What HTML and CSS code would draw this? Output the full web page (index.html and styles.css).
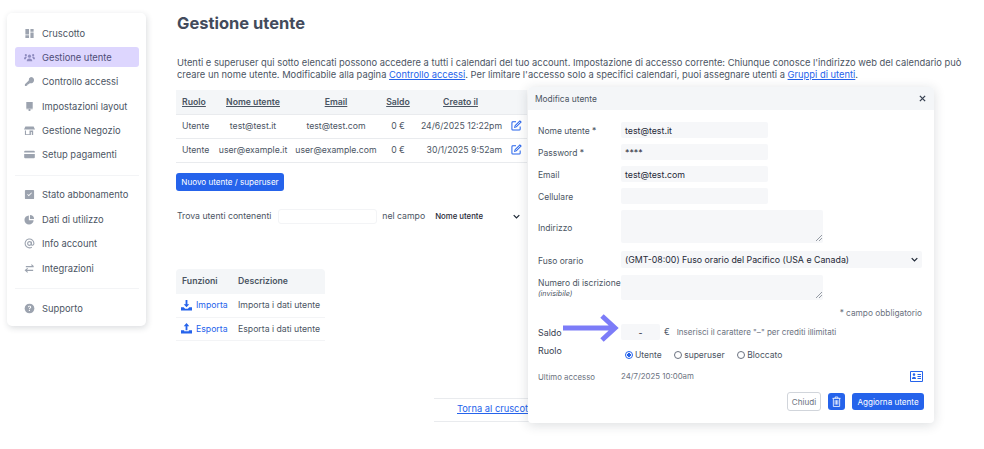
FILE: index.html
```html
<!DOCTYPE html>
<html lang="en">
<head>
  <meta charset="UTF-8">
  <title>Gestione utente</title>
  <link rel="stylesheet" href="styles.css">
</head>
<body>

  <nav class="sidebar">
    <a class="nav-item"><svg class="nav-icon" viewBox="0 0 12 12"><path d="M1.500 1h4v6h-4zM1.500 8h4v3h-4zM7 1h3.500v3H7zM7 5h3.500v6H7z"/></svg>Cruscotto</a>
    <a class="nav-item active"><svg class="nav-icon" viewBox="0 0 12 12"><circle cx="6" cy="4.500" r="1.700"/><circle cx="2" cy="3.500" r="1.200"/><circle cx="10" cy="3.500" r="1.200"/><path d="M3 10c0-2 1-3 3-3s3 1 3 3zM0 8c0-2 1-3 2-3 .6 0 1 .2 1.300.5C2.500 6.200 2 7 2 8zM12 8c0-2-1-3-2-3-.6 0-1 .2-1.300.5.800.7 1.300 1.500 1.300 2.500z"/></svg>Gestione utente</a>
    <a class="nav-item"><svg class="nav-icon" viewBox="0 0 12 12"><path d="M7.500 1a3.500 3.500 0 1 1-1.200 6.800L5 9H4v1H3v1H1V9l4.200-4.200A3.500 3.500 0 0 1 7.500 1z"/></svg>Controllo accessi</a>
    <a class="nav-item"><svg class="nav-icon" viewBox="0 0 12 12"><path d="M2.500 1h7v6.500h-7zM2.500 8h7v1H7v2H5V9H2.500z"/></svg>Impostazioni layout</a>
    <a class="nav-item"><svg class="nav-icon" viewBox="0 0 12 12"><path d="M1.500 1.500h9L12 5H0zM1 6h1.200v4H6V6h4v5H8.500V7.500H7.500V11H1z"/></svg>Gestione Negozio</a>
    <a class="nav-item"><svg class="nav-icon" viewBox="0 0 12 12"><path d="M1.200 2h9.600a1 1 0 0 1 1 1v.8H.2V3a1 1 0 0 1 1-1zM.2 5.500h11.600V9a1 1 0 0 1-1 1H1.200a1 1 0 0 1-1-1z"/></svg>Setup pagamenti</a>
    <hr class="nav-rule">
    <a class="nav-item"><svg class="nav-icon" viewBox="0 0 12 12"><path fill-rule="evenodd" d="M2 1h8a1 1 0 0 1 1 1v8a1 1 0 0 1-1 1H2a1 1 0 0 1-1-1V2a1 1 0 0 1 1-1zm1.500 5L5.200 7.800 8.700 4.300l-.6-.6-2.900 2.900-1.100-1.200z"/></svg>Stato abbonamento</a>
    <a class="nav-item"><svg class="nav-icon" viewBox="0 0 12 12"><path d="M5.300 1.500v5.200h5.200A5 5 0 1 1 5.300 1.500zM6.500 1a4.500 4.500 0 0 1 4.500 4.500H6.500z"/></svg>Dati di utilizzo</a>
    <a class="nav-item"><svg class="nav-icon stroke" viewBox="0 0 12 12"><circle cx="6" cy="6" r="2"/><path d="M8 4v2.800c0 1.500 2.800 1.500 2.800-.8A4.800 4.800 0 1 0 8.500 10"/></svg>Info account</a>
    <a class="nav-item"><svg class="nav-icon stroke" viewBox="0 0 12 12"><path d="M2 4h8.500M8 1.800 10.500 4M10 8H1.500M4 5.800 1.500 8 4 10.200"/></svg>Integrazioni</a>
    <hr class="nav-rule">
    <a class="nav-item"><svg class="nav-icon" viewBox="0 0 12 12"><circle cx="6" cy="6" r="5.300"/><path d="M4.300 4.500C4.500 3.500 5.200 3 6.100 3c1 0 1.700.6 1.700 1.500 0 1.300-1.400 1.200-1.400 2.300H5.400c0-1.600 1.300-1.500 1.300-2.300 0-.4-.3-.6-.7-.6-.4 0-.7.300-.8.800zM5.300 7.500h1.200v1.200H5.300z" fill="#fff"/></svg>Supporto</a>
  </nav>

  <main class="content">
    <h1>Gestione utente</h1>
    <p class="intro">Utenti e superuser qui sotto elencati possono accedere a tutti i calendari del tuo account. Impostazione di accesso corrente: Chiunque conosce l'indirizzo web del calendario può creare un nome utente. Modificabile alla pagina <a href="#">Controllo accessi</a>. Per limitare l'accesso solo a specifici calendari, puoi assegnare utenti a <a href="#">Gruppi di utenti</a>.</p>

    <table class="users">
      <thead>
        <tr><th class="role">Ruolo</th><th class="name">Nome utente</th><th class="mail">Email</th><th class="bal">Saldo</th><th class="date">Creato il</th><th class="edit"></th></tr>
      </thead>
      <tbody>
        <tr>
          <td class="role">Utente</td><td class="name">test@test.it</td><td class="mail">test@test.com</td><td class="bal">0 €</td><td class="date">24/6/2025 12:22pm</td>
          <td class="edit"><svg class="edit-icon" viewBox="0 0 12 12"><path d="M5.500 2H2a1 1 0 0 0-1 1v7a1 1 0 0 0 1 1h7a1 1 0 0 0 1-1V7M4.500 6.200 9.700 1 11 2.300 5.800 7.500l-1.800.4z"/></svg></td>
        </tr>
        <tr>
          <td class="role">Utente</td><td class="name">user@example.it</td><td class="mail">user@example.com</td><td class="bal">0 €</td><td class="date">30/1/2025 9:52am</td>
          <td class="edit"><svg class="edit-icon" viewBox="0 0 12 12"><path d="M5.500 2H2a1 1 0 0 0-1 1v7a1 1 0 0 0 1 1h7a1 1 0 0 0 1-1V7M4.500 6.200 9.700 1 11 2.300 5.800 7.500l-1.800.4z"/></svg></td>
        </tr>
      </tbody>
    </table>

    <button class="btn btn-new">Nuovo utente / superuser</button>

    <div class="search">
      <label>Trova utenti contenenti</label>
      <input class="search-input" type="text">
      <label>nel campo</label>
      <div class="search-select">Nome utente<svg class="chevron" viewBox="0 0 10 6"><path d="M1 1l4 4 4-4"/></svg></div>
    </div>

    <table class="tools">
      <thead>
        <tr><th>Funzioni</th><th>Descrizione</th></tr>
      </thead>
      <tbody>
        <tr>
          <td><a href="#" class="tool-link"><svg class="tool-icon" viewBox="0 0 12 12"><path d="M5 0h2v4.500h2L6 8 3 4.500h2zM0 8h3l1.500 1.500h3L9 8h3v3.500H0z"/></svg>Importa</a></td>
          <td>Importa i dati utente</td>
        </tr>
        <tr>
          <td><a href="#" class="tool-link"><svg class="tool-icon" viewBox="0 0 12 12"><path d="M6 0l3 3.500H7V8H5V3.500H3zM0 8h3.500v1h5V8H12v3.500H0z"/></svg>Esporta</a></td>
          <td>Esporta i dati utente</td>
        </tr>
      </tbody>
    </table>

    <div class="back"><a href="#">Torna al cruscotto</a></div>
  </main>

  <section class="modal">
    <header class="modal-head">
      <span>Modifica utente</span>
      <svg class="close" viewBox="0 0 8 8"><path d="M1 1l6 6M7 1L1 7"/></svg>
    </header>
    <div class="modal-body">
      <div class="field"><label>Nome utente *</label><div class="box short">test@test.it</div></div>
      <div class="field"><label>Password *</label><div class="box short">****</div></div>
      <div class="field"><label>Email</label><div class="box short">test@test.com</div></div>
      <div class="field"><label>Cellulare</label><div class="box short"></div></div>
      <div class="field gap-8"><label>Indirizzo</label><div class="box area"><svg class="grip" viewBox="0 0 6 6"><path d="M0 6l6-6M3 6l3-3"/></svg></div></div>
      <div class="field gap-7"><label>Fuso orario</label><div class="box wide">(GMT-08:00) Fuso orario del Pacifico (USA e Canada)<svg class="chevron" viewBox="0 0 10 6"><path d="M1 1l4 4 4-4"/></svg></div></div>
      <div class="field gap-7"><label>Numero di iscrizione<em>(invisibile)</em></label><div class="box area small"><svg class="grip" viewBox="0 0 6 6"><path d="M0 6l6-6M3 6l3-3"/></svg></div></div>
      <p class="required">* campo obbligatorio</p>
      <div class="field credit">
        <label>Saldo</label>
        <div class="box amount">-</div>
        <span class="euro">€</span>
        <span class="hint">Inserisci il carattere "–" per crediti illimitati</span>
      </div>
      <div class="field role-row">
        <label>Ruolo</label>
        <span class="radio on"></span><span class="radio-text">Utente</span>
        <span class="radio"></span><span class="radio-text">superuser</span>
        <span class="radio"></span><span class="radio-text">Bloccato</span>
      </div>
      <div class="field last">
        <label>Ultimo accesso</label>
        <span>24/7/2025 10:00am</span>
        <svg class="card-icon" viewBox="0 0 13 11"><path fill-rule="evenodd" d="M1 0h11a1 1 0 0 1 1 1v9a1 1 0 0 1-1 1H1a1 1 0 0 1-1-1V1a1 1 0 0 1 1-1zm0 1v9h11V1zm3 1.300a1.300 1.300 0 1 0 0 2.600 1.300 1.300 0 0 0 0-2.600zM2 8h4c0-1.500-.8-2.300-2-2.300S2 6.500 2 8zm5.500-5v1H11V3zm0 2v1H11V5zm0 2v1H11V7z"/></svg>
      </div>
      <div class="actions">
        <button class="btn btn-plain">Chiudi</button>
        <button class="btn btn-icon"><svg viewBox="0 0 10 12"><path d="M.5 2.500h9M3.500 2.500V1h3v1.500M1.500 2.500v9h7v-9M3.500 4.500v5M5 4.500v5M6.500 4.500v5"/></svg></button>
        <button class="btn btn-save">Aggiorna utente</button>
      </div>
    </div>
  </section>

  <svg class="arrow" viewBox="0 0 56 28"><path d="M0 14h51M39 2l13 12-13 12"/></svg>

</body>
</html>
```

FILE: styles.css
```css
* {
  box-sizing: border-box;
}
body {
  margin: 0;
  height: 449px;
  overflow: hidden;
  background: #fff;
  color: #4b5563;
  font-family: Inter, "Liberation Sans", sans-serif;
  font-size: 8.700px;
  display: flex;
  align-items: flex-start;
  padding: 13px 0 0 7px;
}
a {
  color: #2563eb;
}

/* sidebar */
.sidebar {
  width: 139px;
  height: 313px;
  flex: none;
  padding: 10px 7px 0 8px;
  background: #fff;
  border-radius: 5px;
  box-shadow: 1px 2px 6px rgba(31, 41, 55, 0.16);
}
.nav-item {
  display: flex;
  align-items: center;
  height: 20px;
  margin-bottom: 4.400px;
  padding-left: 9px;
  gap: 7px;
  color: #4b5563;
  font-size: 9.350px;
  border-radius: 3px;
}
.nav-item.active {
  background: #ddd6fe;
  color: #4f4d78;
}
.nav-icon {
  width: 11px;
  height: 11px;
  fill: #9ca3af;
  flex: none;
}
.nav-item.active .nav-icon {
  fill: #8f8cc0;
}
.nav-icon.stroke {
  fill: none;
  stroke: #9ca3af;
  stroke-width: 1.200;
}
.nav-rule {
  border: 0;
  border-top: 1px solid #f3f4f6;
  margin: 10px 0 9px;
}

/* main column */
.content {
  width: 795px;
  flex: none;
  margin-left: 30px;
}
h1 {
  margin: 0 0 0 1px;
  color: #434b5c;
  font-size: 16.500px;
  font-weight: 700;
  line-height: 21px;
}
.intro {
  margin: 23px 0 0 1px;
  font-size: 9.350px;
  line-height: 12px;
}

.users {
  width: 351px;
  margin-top: 9px;
  border-collapse: collapse;
  table-layout: fixed;
}
.users th {
  height: 24px;
  background: #f4f6f8;
  font-weight: 600;
  text-decoration: underline;
}
.users td {
  height: 24px;
  white-space: nowrap;
}
.users th, .users td {
  padding: 0;
  text-align: center;
  border-bottom: 1px solid #e9ebee;
}
.users .role { width: 40px; padding-left: 6px; text-align: left; }
.users .name { width: 74px; }
.users .mail { width: 92px; }
.users .bal { width: 32px; }
.users .date { width: 93px; padding-right: 5px; text-align: right; }
.users th.date { padding: 0; text-align: center; }
.users .edit { width: 20px; text-align: left; padding-left: 4px; }
.edit-icon {
  width: 11px;
  height: 11px;
  fill: none;
  stroke: #2563eb;
  stroke-width: 1.100;
  vertical-align: -1px;
}

.btn {
  height: 18px;
  padding: 0 6px;
  border: 0;
  border-radius: 3px;
  background: #2563eb;
  color: #fff;
  font-family: inherit;
  font-size: 8.100px;
}
.btn-new {
  display: block;
  width: 108px;
  margin-top: 10px;
  padding: 0;
}

.search {
  display: flex;
  align-items: center;
  margin: 18px 0 0 1px;
  height: 15px;
}
.search-input {
  width: 99px;
  height: 15px;
  margin: 0 5px 0 7px;
  border: 1px solid #f3f4f6;
  border-radius: 3px;
}
.search-select {
  display: flex;
  justify-content: space-between;
  align-items: center;
  width: 91px;
  margin-left: 6px;
  padding: 0 2px 0 4px;
  color: #1f2937;
  font-size: 7.800px;
  font-weight: 500;
}
.chevron {
  width: 7px;
  height: 5px;
  fill: none;
  stroke: #1f2937;
  stroke-width: 1.800;
}

.tools {
  width: 149px;
  margin-top: 45px;
  border-collapse: collapse;
  table-layout: fixed;
  white-space: nowrap;
}
.tools th {
  height: 25px;
  padding: 0 0 0 6px;
  background: #f4f6f8;
  font-weight: 600;
  text-align: left;
}
.tools td {
  height: 23.500px;
  padding: 0 0 0 6px;
  border-bottom: 1px solid #f3f4f6;
}
.tools th:first-child { border-radius: 4px 0 0 0; width: 56px; }
.tools th:last-child { border-radius: 0 4px 0 0; }
.tool-link {
  display: flex;
  align-items: center;
  gap: 4px;
  margin-left: -1px;
  text-decoration: none;
}
.tool-icon {
  width: 11px;
  height: 11px;
  fill: #2563eb;
}

.back {
  width: 120px;
  height: 24px;
  margin: 57px 0 0 258px;
  padding: 4px 0 0 23px;
  border-top: 1px solid #e9ebee;
  border-bottom: 1px solid #e9ebee;
  font-size: 9.300px;
  white-space: nowrap;
}

/* modal over the page */
.modal {
  position: absolute;
  left: 528px;
  top: 87px;
  width: 406px;
  height: 336px;
  background: #fff;
  border-radius: 4px;
  box-shadow: 0 2px 12px rgba(31, 41, 55, 0.16);
}
.modal-head {
  display: flex;
  justify-content: space-between;
  align-items: center;
  height: 23px;
  padding: 0 8px 0 7px;
  background: #f4f6f8;
  border-radius: 4px 4px 0 0;
  font-size: 8.400px;
}
.close {
  width: 7px;
  height: 7px;
  fill: none;
  stroke: #374151;
  stroke-width: 1.500;
}
.modal-body {
  padding: 12px 11px 0 10px;
}
.field {
  display: flex;
  align-items: center;
  margin-bottom: 6px;
  font-size: 8.500px;
}
.field.gap-8 { margin-bottom: 8px; }
.field.gap-7 { margin-bottom: 7px; }
.field label {
  width: 83px;
  flex: none;
  padding-top: 2px;
  white-space: nowrap;
}
.field em {
  display: block;
  font-size: 7.200px;
  line-height: 11px;
}
.box {
  background: #f6f7f9;
  border-radius: 2px;
  color: #1f2937;
  display: flex;
  align-items: center;
  padding-left: 4px;
  font-size: 8.800px;
  position: relative;
}
.box.short {
  width: 147px;
  height: 16px;
}
.box.area {
  width: 202px;
  height: 33px;
}
.box.area.small {
  height: 25px;
}
.box.wide {
  width: 301px;
  height: 17px;
  justify-content: space-between;
  padding: 0 4px 0 4px;
}
.grip {
  position: absolute;
  right: 1px;
  bottom: 2px;
  width: 6px;
  height: 6px;
  fill: none;
  stroke: #6b7280;
  stroke-width: 0.700;
}
.required {
  height: 12px;
  margin: 0 1px 0 0;
  text-align: right;
  color: #6b7280;
  font-size: 8.300px;
  line-height: 12px;
}
.credit {
  margin: 5px 0 0;
}
.credit label {
  padding-top: 0;
  color: #374151;
  font-size: 8.900px;
}
.box.amount {
  width: 39px;
  height: 16px;
  padding: 0;
  justify-content: center;
}
.euro {
  margin: 0 7px 0 4px;
}
.hint {
  color: #6b7280;
  font-size: 8.050px;
}
.role-row {
  height: 20px;
  margin: 3px 0 0;
}
.role-row label {
  align-self: flex-start;
  margin-top: 2px;
  padding-top: 0;
  color: #374151;
  font-size: 8.900px;
}
.radio {
  width: 8px;
  height: 8px;
  margin: 3px 2px 0 0;
  border: 1px solid #6b7280;
  border-radius: 50%;
}
.role-row label + .radio {
  margin-left: 4px;
}
.radio.on {
  border-color: #2563eb;
  background: radial-gradient(#2563eb 45%, #fff 50%);
}
.radio-text {
  margin: 3px 12.500px 0 0;
}
.last {
  margin: 7px 0 0;
  font-size: 7.850px;
  color: #6b7280;
}
.card-icon {
  width: 13px;
  height: 11px;
  margin-left: auto;
  fill: #2563eb;
}
.actions {
  display: flex;
  justify-content: flex-end;
  align-items: center;
  gap: 7px;
  margin: 10px -1px 0 0;
}
.btn-plain {
  width: 34px;
  height: 19px;
  padding: 0;
  background: #fff;
  border: 1px solid #d1d5db;
  color: #6b7280;
}
.btn-icon {
  width: 17px;
  height: 17px;
  padding: 0;
}
.btn-icon svg {
  width: 9px;
  height: 11px;
  display: block;
  margin: 0 auto;
  fill: none;
  stroke: #fff;
  stroke-width: 0.900;
}
.btn-save {
  width: 72px;
  height: 17px;
  padding: 0;
}

.arrow {
  position: absolute;
  left: 563px;
  top: 314px;
  width: 56px;
  height: 28px;
  fill: none;
  stroke: #7c7cf8;
  stroke-width: 5;
}
```
